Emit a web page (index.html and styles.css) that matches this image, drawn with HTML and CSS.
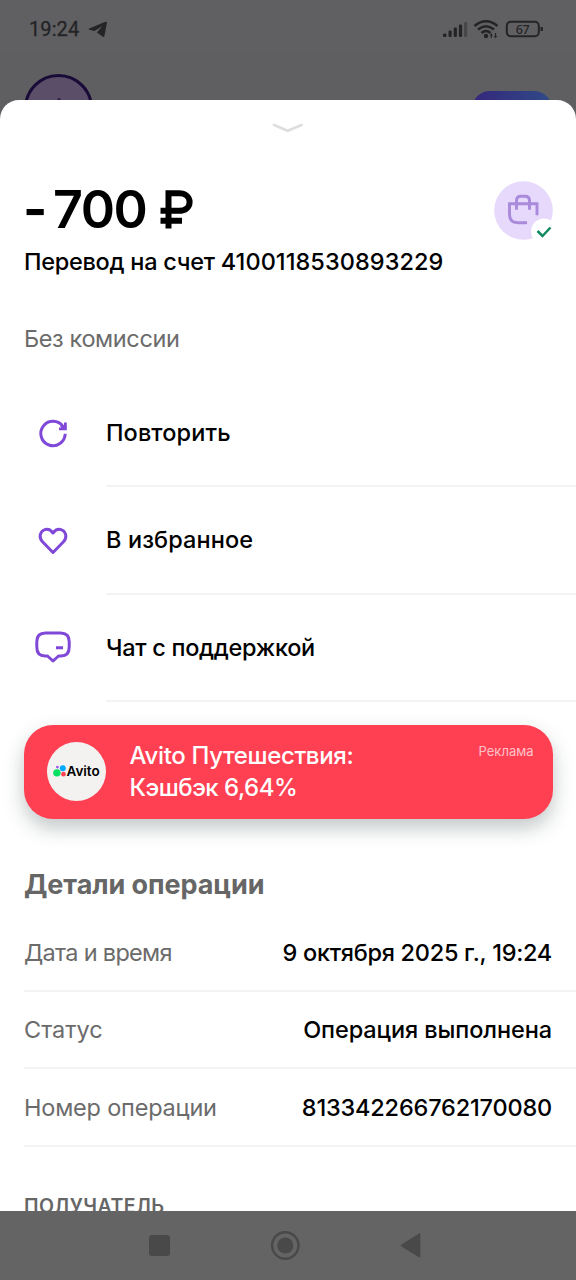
FILE: index.html
```html
<!DOCTYPE html>
<html lang="ru">
<head>
<meta charset="utf-8">
<title>Детали операции</title>
<link rel="stylesheet" href="styles.css">
</head>
<body>
<div class="screen">
  <header class="status">
    <span class="clock">19:24</span>
    <svg class="plane" width="20" height="18" viewBox="0 0 20 18"><path d="M1.200 8.400 17.500 1.800c1-.4 1.600.1 1.400 1.100l-2.500 13c-.2 1-1 1.300-1.800.7L8.800 12.500 14.500 6 6.500 10.900 1.200 9.700c-.8-.3-.8-1 0-1.300z"/></svg>
    <svg class="signals" width="104" height="22" viewBox="0 0 104 22">
      <rect x="3" y="15.500" width="3.500" height="3.500" rx="1.200"/><rect x="8.500" y="12.500" width="3.200" height="6.500" rx="1.200"/><rect x="13.700" y="9.500" width="3.200" height="9.500" rx="1.200"/><rect x="18.900" y="6.500" width="3.200" height="12.500" rx="1.200"/><rect class="dim" x="24" y="4" width="3.200" height="15" rx="1.200"/>
      <g class="waves"><path d="M34.500 8Q46-1.500 57.500 8M38 11.500Q46 5 54 11.500M41.500 15Q46 11 50.500 15"/></g>
      <circle cx="46" cy="18" r="2.200"/><path d="M51.300 15.200 53 17.500h-1.100V20h-1.200v-2.500h-1.100zM55.500 20.300l-1.700-2.300h1.100v-3h1.200v3h1.100z"/>
      <rect class="battery" x="66.800" y="3.800" width="32" height="14.400" rx="4"/><path d="M100.500 9h1.500q1 0 1 1v2q0 1-1 1h-1.500z"/>
      <text x="82.600" y="15.800" text-anchor="middle">67</text>
    </svg>
  </header>
  <div class="backdrop"><div class="avatar"><i></i></div><div class="pill"></div></div>
  <main class="sheet">
    <svg class="grip" width="32" height="12" viewBox="0 0 32 12"><path d="M2 3 15.700 8.800 29.500 3"/></svg>
    <section class="summary">
      <div class="sum-text">
        <h1 class="amount"><span class="minus">-</span><span class="digits">700</span><svg width="34" height="40" viewBox="0 0 34 40"><path d="M8.500 38.500V3.300H19c6.300 0 10.600 3.500 10.600 8.700S25.300 20.800 19 20.800H.5M.5 30.800h21.500"/></svg></h1>
        <p class="desc">Перевод на счет <span>4100118530893229</span></p>
      </div>
      <svg class="bag" width="60" height="60" viewBox="0 0 60 60">
        <circle cx="29.500" cy="29.500" r="29.300" fill="#e6d9fc"/>
        <path d="M33 42.500H24Q15.500 42.500 15.500 34V23.500H43V35M22.500 29.500V20.500Q22.500 16 27 16H31Q35.500 16 35.500 20.500V29.500" transform="translate(0 -.8)" fill="none" stroke="#a98adb" stroke-width="2.900"/>
        <circle cx="50" cy="50.500" r="13" fill="#fff"/>
        <path d="m43.500 50 5 5L56.500 46.500" fill="none" stroke="#128a5f" stroke-width="2.500"/>
      </svg>
    </section>
    <p class="fee">Без комиссии</p>
    <nav class="actions">
      <div class="action"><svg width="40" height="36" viewBox="0 0 40 36"><path d="M32.200 17.800A12.200 12.200 0 1 1 30 10.500"/><path class="tip" d="M26 12.800H32.400V6.600M28 9.500 32 12.500"/></svg><span class="repeat">Повторить</span></div>
      <div class="action"><svg width="40" height="36" viewBox="0 0 40 36"><path d="M20 29.500 9.500 18.800C5.500 14.700 7 9 11 7c3.300-1.500 6.700-.2 9 3 2.300-3.200 5.700-4.500 9-3 4 2 5.500 7.700 1.500 11.800z"/></svg><span class="fav">В избранное</span></div>
      <div class="action"><svg width="40" height="36" viewBox="0 0 40 36"><path d="M12.500 3H27.500Q36.200 3 36.200 11.500V17Q36.200 26 28 26H25.500L20 31 14.500 26H12Q3.800 26 3.800 17V11.500Q3.800 3 12.500 3zM23 17.800h7"/></svg><span class="chat">Чат с поддержкой</span></div>
    </nav>
    <section class="promo">
      <div class="brand"><svg width="14" height="14" viewBox="0 0 15 14"><circle cx="4.200" cy="9" r="4" fill="#04e061"/><circle cx="10.500" cy="4" r="3.200" fill="#00aaff"/><circle cx="4.700" cy="2.800" r="1.500" fill="#965eeb"/><circle cx="11.200" cy="10.400" r="2.500" fill="#ff4053"/></svg><b>Avito</b></div>
      <p class="offer"><span class="travel">Avito Путешествия:</span><span class="cash">Кэшбэк 6,64%</span></p>
      <small class="ad">Реклама</small>
    </section>
    <h2 class="heading">Детали операции</h2>
    <dl class="details">
      <div class="row"><dt class="k-date">Дата и время</dt><dd class="v-date">9 октября 2025 г., 19:24</dd></div>
      <div class="row"><dt class="k-status">Статус</dt><dd class="v-status">Операция выполнена</dd></div>
      <div class="row"><dt class="k-number">Номер операции</dt><dd class="v-number">813342266762170080</dd></div>
    </dl>
    <h3 class="recipient">ПОЛУЧАТЕЛЬ</h3>
  </main>
  <footer class="navbar"><svg width="576" height="69" viewBox="0 0 576 69"><rect x="149" y="24" width="21" height="21" rx="3"/><circle cx="285.300" cy="34.500" r="8"/><circle class="ring" cx="285.300" cy="34.500" r="13.200"/><path d="M401.500 33.500 419 22.500q1.300-.7 1.300.8V45.500q0 1.500-1.300.8L401.500 35.500q-1.500-1 0-2z"/></svg></footer>
</div>
</body>
</html>
```
FILE: styles.css
```css
* { box-sizing: border-box; }
body, h1, h2, h3, p, dl, dd { margin: 0; }
body { background: #5f5f61; font-family: Inter, "Noto Sans", sans-serif; }
svg { display: block; flex: none; }
.screen { width: 576px; height: 1280px; display: flex; flex-direction: column; overflow: hidden; background: #5f5f61; }
.status { height: 50px; flex: none; display: flex; align-items: center; padding: 7px 32px 0 29px; background: #606062; fill: #242426; }
.clock { font: 400 20px/24px Roboto, sans-serif; color: #242426; letter-spacing: .1px; margin-right: 9px; -webkit-text-stroke: .3px #242426; }
.signals { margin-left: auto; }
.signals .dim { fill: #474749; }
.signals .waves { fill: none; stroke: #242426; stroke-width: 2.6; }
.signals .battery { fill: none; stroke: #242426; stroke-width: 2; }
.signals text { font: 500 12.5px "Noto Sans", sans-serif; letter-spacing: -.4px; }
.backdrop { height: 50px; flex: none; display: flex; justify-content: space-between; align-items: flex-start; padding: 24px 24px 0; overflow: hidden; }
.avatar { width: 69px; height: 69px; flex: none; border: 3px solid #180b38; border-radius: 50%; background: #5b4e68; display: flex; justify-content: center; }
.avatar i { width: 4px; height: 14px; margin-top: 21px; border-radius: 2px; background: #36204f; }
.pill { width: 80px; height: 36px; margin-top: 17px; border-radius: 18px; background: linear-gradient(90deg, #35277b, #304a87); }
.sheet { height: 1111px; flex: none; background: #fff; border-radius: 19px 19px 0 0; padding: 22px 0 0 24px; overflow: hidden; display: flex; flex-direction: column; }
.grip { margin: 0 auto; transform: translateX(-12px); fill: none; stroke: #dededf; stroke-width: 2.8; stroke-linecap: round; }
.summary { display: flex; justify-content: space-between; flex: none; margin-top: 47px; padding-right: 22px; height: 102px; }
.amount { display: flex; align-items: center; height: 58px; color: #000; font-size: 52px; line-height: 58px; font-weight: 600; fill: none; stroke: #000; white-space: nowrap; }
.amount span { stroke: none; }
.minus { width: 29px; margin-left: -1px; font-weight: 700; }
.digits { width: 106px; letter-spacing: -1.5px; padding-left: 1px; }
.amount svg { margin-left: 2px; stroke-width: 6; }
.desc { font-size: 23.5px; line-height: 30px; font-weight: 500; margin-top: 8px; white-space: nowrap; letter-spacing: -.28px; }
.desc span { letter-spacing: .06px; }
.fee { flex: none; height: 97px; padding-top: 41px; font-size: 23.5px; line-height: 30px; color: #6b6b6b; letter-spacing: -.38px; }
.actions { flex: none; }
.action { display: flex; align-items: center; height: 107.300px; padding-left: 9px; fill: none; stroke: #8048d8; stroke-width: 3; stroke-linejoin: round; }
.action .tip { stroke-width: 2.8; stroke-linejoin: miter; }
.action span { stroke: none; flex: 1; margin-left: 33px; height: 107.300px; display: flex; align-items: center; border-bottom: 2px solid #f3f3f4; font-size: 23.500px; font-weight: 500; }
.action .repeat, .action .fav { letter-spacing: .1px; }
.action .chat { letter-spacing: -.3px; }
.promo { display: flex; flex: none; width: 529px; height: 94px; margin: 23px 0 0 -.5px; border-radius: 29px; background: #ff4053; color: #fff; padding: 17px 19px 0 23px; box-shadow: 0 9px 20px rgba(20, 40, 40, .26); }
.brand { width: 59px; height: 59px; flex: none; border-radius: 50%; background: #f3f2f1; color: #000; display: flex; align-items: center; padding-left: 6px; }
.brand b { font-size: 13.5px; letter-spacing: 0; font-weight: 600; }
.offer { margin-left: 24px; font-size: 24px; line-height: 32px; font-weight: 500; white-space: nowrap; display: flex; flex-direction: column; margin-top: -2px; }
.travel { letter-spacing: -.35px; }
.cash { letter-spacing: -.5px; }
.ad { margin-left: auto; font-size: 13px; line-height: 18px; color: #ffc2c9; }
.heading { flex: none; margin-top: 48px; font-size: 27px; line-height: 36px; font-weight: 700; color: #666; letter-spacing: -.08px; }
.details { flex: none; margin-top: 12px; padding: 0; }
.row { display: flex; justify-content: space-between; align-items: center; height: 77.300px; padding-right: 24px; border-bottom: 2px solid #f3f3f4; font-size: 23.500px; white-space: nowrap; }
.row dt { color: #6b6b6b; }
.row dd { font-weight: 500; color: #000; }
.k-date { letter-spacing: -.7px; }
.k-number { letter-spacing: -.2px; }
.v-date { letter-spacing: -.28px; }
.v-status { letter-spacing: -.1px; }
.v-number { letter-spacing: -.18px; }
.recipient { flex: none; margin-top: 46px; font-size: 19.500px; line-height: 26px; font-weight: 600; color: #666; letter-spacing: .5px; }
.navbar { height: 69px; flex: none; background: #646464; fill: #494949; }
.navbar .ring { fill: none; stroke: #494949; stroke-width: 2.4; }
```
